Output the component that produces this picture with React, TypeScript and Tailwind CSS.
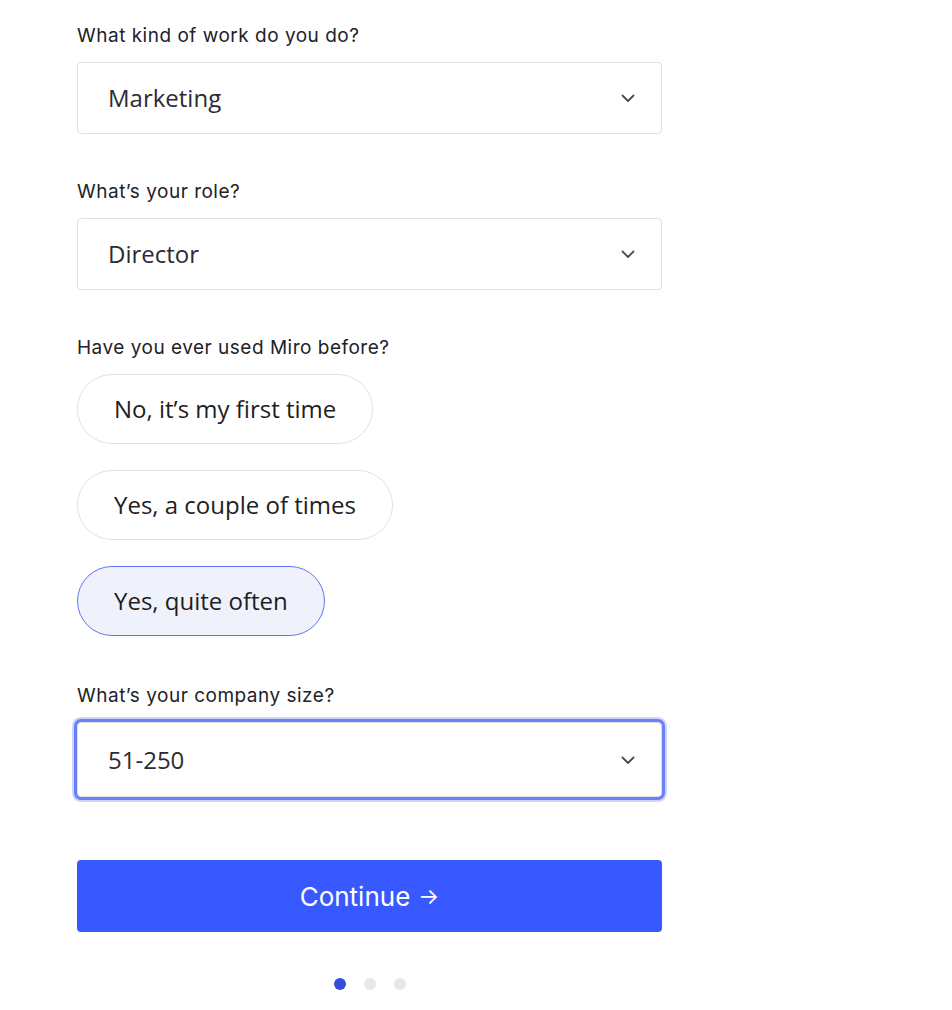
import { useState } from "react";

const labelFont = { fontFamily: "Inter, 'Liberation Sans', sans-serif" };
const valueFont = { fontFamily: "'Open Sans', 'Noto Sans', sans-serif" };

function Chevron() {
  return (
    <svg width="16" height="16" viewBox="0 0 16 16" fill="none" className="text-[#4a4a55]">
      <path d="M2.5 5.5 8 11 13.5 5.5" stroke="currentColor" strokeWidth="1.8" strokeLinecap="round" strokeLinejoin="round" />
    </svg>
  );
}

function Select({ value, focused }: { value: string; focused?: boolean }) {
  return (
    <div
      className={`flex w-[585px] items-center justify-between rounded-[4px] border border-[#e0e0e6] bg-white pl-[30px] pr-[25px] ${
        focused ? "h-[75px] shadow-[0_0_0_3px_#6b7ff7,0_0_0_5px_#cdd4fd]" : "h-[72px]"
      }`}
    >
      <span className="text-[24px] text-[#2b2b33]" style={valueFont}>
        {value}
      </span>
      <Chevron />
    </div>
  );
}

function Label({ children }: { children: string }) {
  return (
    <div className="mb-[14px] text-[19px] leading-6 tracking-[0.5px] text-[#222228]" style={labelFont}>
      {children}
    </div>
  );
}

const usage = ["No, it’s my first time", "Yes, a couple of times", "Yes, quite often"];

export default function App() {
  const [picked, setPicked] = useState(2);
  return (
    <div className="min-h-[1010px] w-[952px] bg-white pl-[77px] pt-[24px]">
      <Label>What kind of work do you do?</Label>
      <Select value="Marketing" />

      <div className="mt-[46px]">
        <Label>What’s your role?</Label>
        <Select value="Director" />
      </div>

      <div className="mt-[46px]">
        <Label>Have you ever used Miro before?</Label>
        <div className="flex flex-col items-start gap-[26px]">
          {usage.map((u, i) => (
            <button
              key={u}
              onClick={() => setPicked(i)}
              className={`h-[70px] rounded-full border px-[36px] text-[24px] text-[#1e1e24] ${
                picked === i ? "border-[#5f74f4] bg-[#eff2fb]" : "border-[#e0e0e6] bg-white"
              }`}
              style={valueFont}
            >
              {u}
            </button>
          ))}
        </div>
      </div>

      <div className="mt-[48px]">
        <Label>What’s your company size?</Label>
        <Select value="51-250" focused />
      </div>

      <button
        className="mt-[63px] flex h-[72px] w-[585px] items-center justify-center rounded-[4px] bg-[#3859ff] text-[26px] text-white"
        style={labelFont}
      >
        Continue <span className="ml-2 text-[22px]">→</span>
      </button>

      <div className="mt-[46px] flex w-[585px] justify-center gap-[18px]">
        <span className="h-3 w-3 rounded-full bg-[#3450d8]" />
        <span className="h-3 w-3 rounded-full bg-[#e7e7ee]" />
        <span className="h-3 w-3 rounded-full bg-[#e7e7ee]" />
      </div>
    </div>
  );
}
